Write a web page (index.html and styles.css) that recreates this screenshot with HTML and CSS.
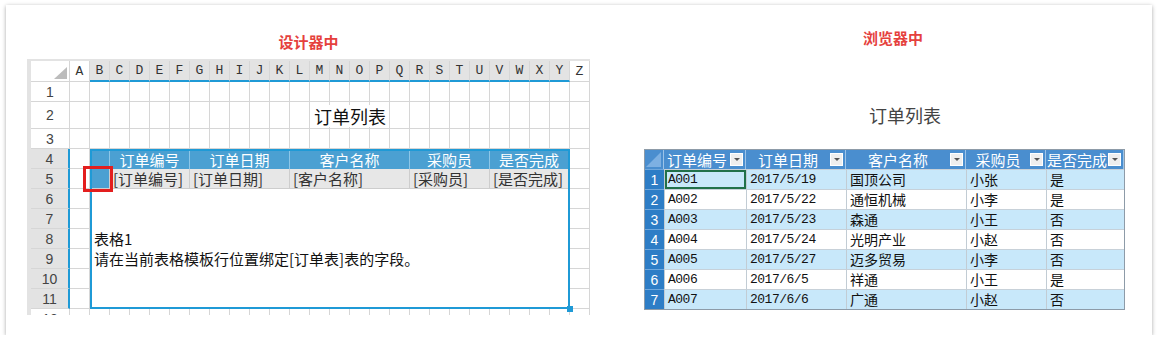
FILE: index.html
```html
<!DOCTYPE html>
<html lang="zh-CN">
<head>
  <meta charset="UTF-8" />
  <meta name="viewport" content="width=device-width, initial-scale=1.0" />
  <title>订单列表 - 设计器与浏览器</title>
  <link rel="stylesheet" href="styles.css">
</head>
<body>
  <div class="card">
    <section class="designer">
      <h2 class="caption">设计器中</h2>
      <div class="sheet" id="sheet">
        <div class="sheet-title">订单列表</div>
        <div class="tpl">
          <div class="tpl-head">
            <span></span>
            <span>订单编号</span>
            <span>订单日期</span>
            <span>客户名称</span>
            <span>采购员</span>
            <span>是否完成</span>
          </div>
          <div class="tpl-row">
            <span class="anchor"></span>
            <span>[订单编号]</span>
            <span>[订单日期]</span>
            <span>[客户名称]</span>
            <span>[采购员]</span>
            <span>[是否完成]</span>
          </div>
          <div class="tpl-note">
            表格1<br>
            请在当前表格模板行位置绑定[订单表]表的字段。
          </div>
          <div class="cursor"></div>
          <div class="handle"></div>
        </div>
      </div>
    </section>

    <section class="browser">
      <h2 class="caption">浏览器中</h2>
      <div class="report-title">订单列表</div>
      <div class="grid" id="grid"></div>
    </section>
  </div>

  <script>
    // designer sheet: column/row headers and empty cells
    const sheet = document.getElementById('sheet');
    const letters = 'ABCDEFGHIJKLMNOPQRSTUVWXYZ'.split('');
    const rowCount = 12;

    for (let r = 0; r <= rowCount; r++) {
      for (let c = 0; c <= letters.length; c++) {
        const cell = document.createElement('div');
        cell.style.gridRow = r + 1;
        cell.style.gridColumn = c + 1;
        if (r === 0 && c === 0) {
          cell.className = 'cell corner';
        } else if (r === 0) {
          const inTable = c >= 2 && c <= 25;
          cell.className = 'cell col-head' + (inTable ? ' sel' : '');
          cell.textContent = letters[c - 1];
        } else if (c === 0) {
          const inTable = r >= 4 && r <= 11;
          cell.className = 'cell row-head' + (inTable ? ' sel' : '');
          cell.textContent = r;
        } else {
          cell.className = 'cell';
        }
        sheet.appendChild(cell);
      }
    }

    // browser preview grid
    const columns = ['订单编号', '订单日期', '客户名称', '采购员', '是否完成'];
    const orders = [
      ['A001', '2017/5/19', '国顶公司', '小张', '是'],
      ['A002', '2017/5/22', '通恒机械', '小李', '是'],
      ['A003', '2017/5/23', '森通', '小王', '否'],
      ['A004', '2017/5/24', '光明产业', '小赵', '否'],
      ['A005', '2017/5/27', '迈多贸易', '小李', '否'],
      ['A006', '2017/6/5', '祥通', '小王', '是'],
      ['A007', '2017/6/6', '广通', '小赵', '否']
    ];

    const grid = document.getElementById('grid');
    let html = '<div class="g-corner"></div>';
    columns.forEach(name => {
      html += `<div class="g-head"><span>${name}</span><i class="dd"></i></div>`;
    });
    orders.forEach((row, i) => {
      const stripe = i % 2 === 0 ? 'odd' : 'even';
      html += `<div class="g-num">${i + 1}</div>`;
      row.forEach((val, j) => {
        let cls = 'g-cell ' + stripe;
        if (j < 2) cls += ' mono';
        if (i === 0 && j === 0) cls += ' cur';
        html += `<div class="${cls}">${val}</div>`;
      });
    });
    grid.innerHTML = html;
  </script>
</body>
</html>
```

FILE: styles.css
```css
:root {
  --sel-blue: #1f9ad6;
  --tpl-blue: #4ba0d2;
  --line: #d6d6d6;
  --head-gray: #e3e3e3;
  --caption: #e5413d;
  --hd-blue: #4a8ecf;
  --num-blue: #2d7dc6;
  --stripe: #c8e8fa;
}
* { box-sizing: border-box; margin: 0; padding: 0; }
body {
  background: #fff;
  font-family: "Noto Sans CJK SC", sans-serif;
  color: #222;
}
.card {
  margin: 5px 0 0 6px;
  width: 1146px;
  height: 330px;
  background: #fff;
  box-shadow: 0 1px 4px rgba(0,0,0,0.35);
  display: flex;
  padding-left: 21px;
}
.caption {
  font-size: 15px;
  line-height: 20px;
  font-weight: 700;
  color: var(--caption);
  text-align: center;
}

/* designer */
.designer {
  width: 563px;
  padding-top: 27px;
}
.sheet {
  margin-top: 7px;
  height: 256px;
  overflow: hidden;
  background: var(--head-gray);
  padding: 2px 0 0 4px;
  display: grid;
  grid-template-columns: 39px repeat(26, 20px);
  grid-template-rows: 21px 20px 27px repeat(10, 20px);
}
.cell {
  background: #fff;
  border-right: 1px solid var(--line);
  border-bottom: 1px solid var(--line);
}
.col-head {
  font: 13px "Liberation Mono", monospace;
  color: #333;
  display: flex;
  align-items: center;
  justify-content: center;
}
.col-head.sel {
  background: var(--head-gray);
  border-bottom: 2px solid var(--sel-blue);
}
.row-head {
  font: 14px "Liberation Sans", sans-serif;
  color: #444;
  display: flex;
  align-items: center;
  justify-content: center;
}
.row-head.sel {
  background: var(--head-gray);
  border-right: 2px solid var(--sel-blue);
}
.corner { position: relative; }
.corner::after {
  content: "";
  position: absolute;
  right: 2px;
  bottom: 2px;
  width: 13px;
  height: 12px;
  background: #bcbcbc;
  clip-path: polygon(100% 0, 100% 100%, 0 100%);
}
.sheet-title {
  grid-row: 3;
  grid-column: 14 / 18;
  justify-self: center;
  align-self: center;
  z-index: 1;
  background: #fff;
  font-size: 18px;
  line-height: 22px;
  color: #111;
}
.tpl {
  grid-row: 5 / 13;
  grid-column: 3 / 27;
  z-index: 2;
  position: relative;
  background: #fff;
  border: 2px solid var(--sel-blue);
  font-size: 15px;
}
.tpl-head, .tpl-row {
  display: grid;
  grid-template-columns: 18px 80px 100px 120px 80px 1fr;
}
.tpl-head {
  height: 18px;
  line-height: 18px;
  background: var(--tpl-blue);
  color: #fff;
}
.tpl-head span {
  text-align: center;
  border-right: 1px solid #8cc6e8;
}
.tpl-row {
  height: 20px;
  line-height: 19px;
  background: #e7e7e7;
  border-bottom: 1px solid #cdcdcd;
  color: #333;
}
.tpl-row span {
  padding-left: 3px;
  border-right: 1px solid #cdcdcd;
  white-space: nowrap;
}
.tpl-head span:last-child, .tpl-row span:last-child { border-right: none; }
.tpl-row .anchor { background: var(--tpl-blue); }
.tpl-note {
  padding: 40px 0 0 2px;
  line-height: 20px;
  color: #111;
  white-space: nowrap;
}
.cursor {
  position: absolute;
  left: -9px;
  top: 15px;
  width: 30px;
  height: 26px;
  border: 3px solid #e31e1e;
}
.handle {
  position: absolute;
  right: -5px;
  bottom: -5px;
  width: 6px;
  height: 6px;
  background: var(--sel-blue);
}

/* browser preview */
.browser {
  width: 481px;
  margin-left: 54px;
  padding-top: 23px;
}
.browser .caption { padding-left: 17px; }
.report-title {
  margin-top: 57px;
  padding-left: 41px;
  text-align: center;
  font-size: 18px;
  line-height: 20px;
  color: #444;
}
.grid {
  margin-top: 24px;
  display: grid;
  grid-template-columns: 19px 82px 100px 120px 80px 78px;
  grid-template-rows: 19px repeat(7, 20px);
  border: 1px solid #8d9ba8;
  font-size: 14px;
}
.g-corner {
  background: var(--hd-blue);
  position: relative;
  border-right: 1px solid #9cc3e8;
}
.g-corner::after {
  content: "";
  position: absolute;
  right: 2px;
  bottom: 2px;
  width: 15px;
  height: 15px;
  background: #7db0e2;
  clip-path: polygon(100% 0, 100% 100%, 0 100%);
}
.g-head {
  background: var(--hd-blue);
  color: #fff;
  font-size: 15px;
  display: flex;
  align-items: center;
  border-right: 1px solid #9cc3e8;
}
.g-head:last-child { border-right: none; }
.g-head span {
  flex: 1;
  text-align: center;
  white-space: nowrap;
  line-height: 19px;
}
.dd {
  width: 13px;
  height: 13px;
  margin-right: 2px;
  flex-shrink: 0;
  background: #eeeeee;
  border: 1px solid #fff;
  display: flex;
  align-items: center;
  justify-content: center;
}
.dd::after {
  content: "";
  border-left: 3px solid transparent;
  border-right: 3px solid transparent;
  border-top: 3px solid #555;
}
.g-num {
  background: var(--num-blue);
  color: #fff;
  text-align: center;
  line-height: 20px;
  border-top: 1px solid #6fa7dc;
  font-family: "Liberation Sans", sans-serif;
}
.g-cell {
  padding-left: 3px;
  line-height: 19px;
  border-top: 1px solid #c7d1d9;
  border-left: 1px solid #c2ccd4;
  color: #111;
  white-space: nowrap;
}
.g-cell.odd { background: var(--stripe); }
.g-cell.even { background: #fff; }
.g-cell.mono {
  font-family: "Liberation Mono", monospace;
  font-size: 13px;
  letter-spacing: -0.5px;
}
.g-cell.cur { box-shadow: inset 0 0 0 2px #21714a; }
```
